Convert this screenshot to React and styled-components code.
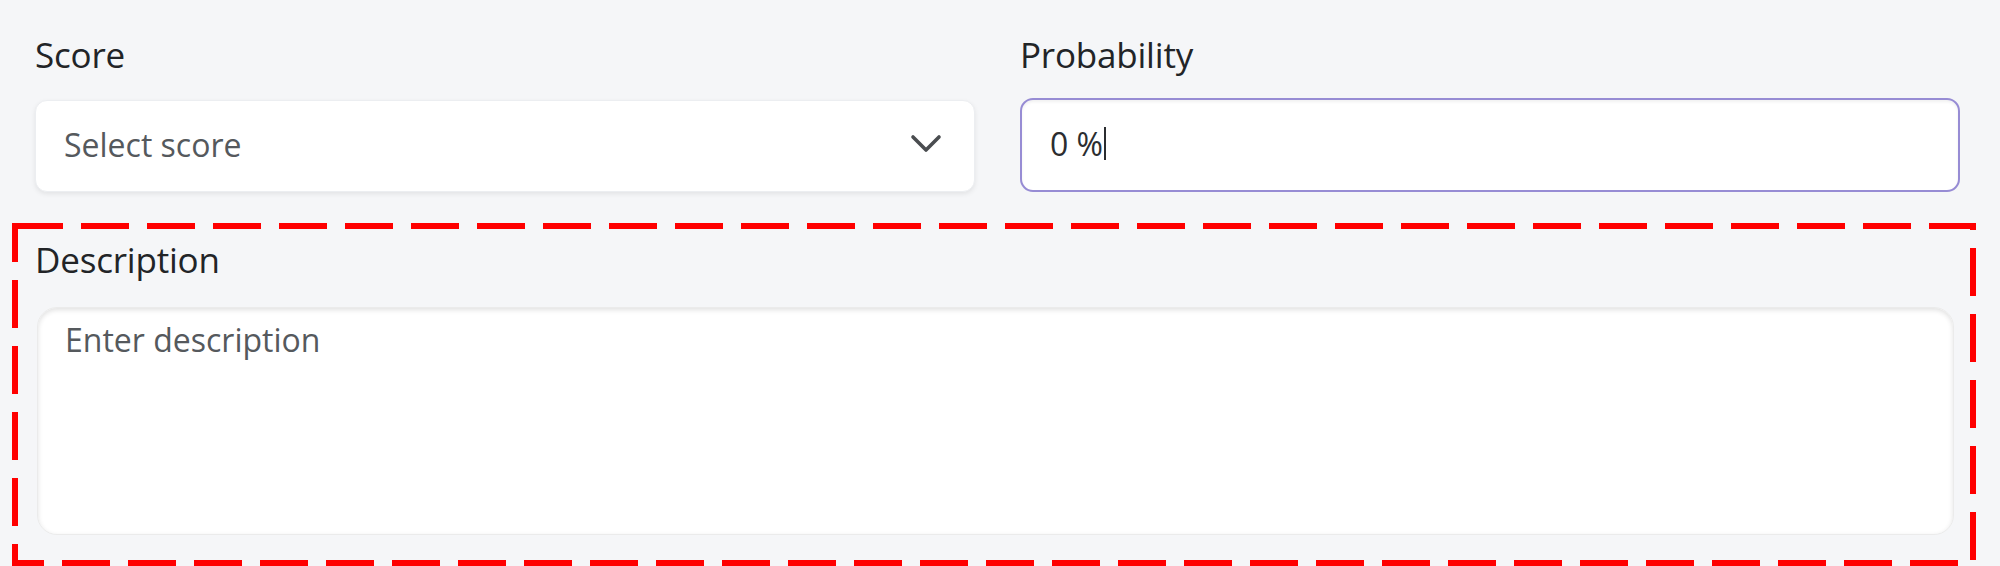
import React from 'react';
import styled, { createGlobalStyle } from 'styled-components';

const GlobalStyle = createGlobalStyle`
  html, body {
    margin: 0;
    padding: 0;
    background: #f5f6f8;
  }
  * {
    box-sizing: border-box;
  }
`;

const Page = styled.div`
  min-height: 566px;
  padding: 31px 40px 0 35px;
  background: #f5f6f8;
  font-family: "Open Sans", "Liberation Sans", sans-serif;
  overflow: hidden;
`;

const TopRow = styled.div`
  display: grid;
  grid-template-columns: 1fr 1fr;
  column-gap: 45px;
`;

const Field = styled.div`
  display: flex;
  flex-direction: column;
`;

const Label = styled.div`
  font-size: 35px;
  line-height: 48px;
  font-weight: 500;
  color: #222427;
  margin-bottom: ${({gap}) => gap || 21}px;
  letter-spacing: -0.2px;
`;

const SelectBox = styled.div`
  height: 92px;
  display: flex;
  align-items: center;
  justify-content: space-between;
  padding: 0 32px 4px 28px;
  background: #fff;
  border: 1px solid #eceef1;
  border-radius: 12px;
  box-shadow: 0 2px 5px rgba(0, 0, 0, 0.08);
`;

const Placeholder = styled.span`
  font-size: 32px;
  color: #55595d;
`;

const InputBox = styled.div`
  height: 94px;
  margin-top: -2px;
  display: flex;
  align-items: center;
  padding: 0 28px 3px;
  background: #fff;
  border: 2px solid #978cd4;
  border-radius: 13px;
  box-shadow: inset 0 2px 3px rgba(0, 0, 0, 0.06);
`;

const Value = styled.span`
  font-size: 32px;
  color: #2b2d30;
`;

const Caret = styled.span`
  display: inline-block;
  width: 2px;
  height: 33px;
  margin-left: 1px;
  background: #2b2d30;
  vertical-align: middle;
`;

const DescField = styled(Field)`
  position: relative;
  margin-top: 44px;
`;

const TextArea = styled.textarea`
  height: 228px;
  margin: 0 6px 0 2px;
  padding: 10px 27px;
  resize: none;
  border: 1px solid #ebebeb;
  border-radius: 20px;
  background: #fff;
  box-shadow: inset 0 2px 5px rgba(0, 0, 0, 0.12);
  font-family: "Open Sans", "Liberation Sans", sans-serif;
  font-size: 32px;
  color: #2b2d30;
  outline: none;

  &::placeholder {
    color: #55595d;
  }
`;

const Highlight = styled.svg`
  position: absolute;
  top: -13px;
  left: -23px;
  width: calc(100% + 39px);
  height: calc(100% + 44px);
  pointer-events: none;
  overflow: visible;
`;

const HighlightRect = styled.rect`
  x: 3px;
  y: 3px;
  width: calc(100% - 6px);
  height: calc(100% - 6px);
  fill: none;
  stroke: #ff0000;
  stroke-width: 6px;
  stroke-dasharray: 48 18;
`;

const Chevron = () => (
    <svg width="32" height="20" viewBox="0 0 32 20">
        <polyline
            points="3,3 16,16 29,3"
            fill="none"
            stroke="#4a4d50"
            strokeWidth="3.6"
            strokeLinecap="round"
            strokeLinejoin="round"
        />
    </svg>
);

export default function App() {
    return (
        <>
            <GlobalStyle />
            <Page>
                <TopRow>
                    <Field>
                        <Label>Score</Label>
                        <SelectBox>
                            <Placeholder>Select score</Placeholder>
                            <Chevron />
                        </SelectBox>
                    </Field>
                    <Field>
                        <Label>Probability</Label>
                        <InputBox>
                            <Value>0 %</Value>
                            <Caret />
                        </InputBox>
                    </Field>
                </TopRow>
                <DescField>
                    <Highlight>
                        <HighlightRect />
                    </Highlight>
                    <Label gap={23}>Description</Label>
                    <TextArea placeholder="Enter description" readOnly />
                </DescField>
            </Page>
        </>
    );
}
